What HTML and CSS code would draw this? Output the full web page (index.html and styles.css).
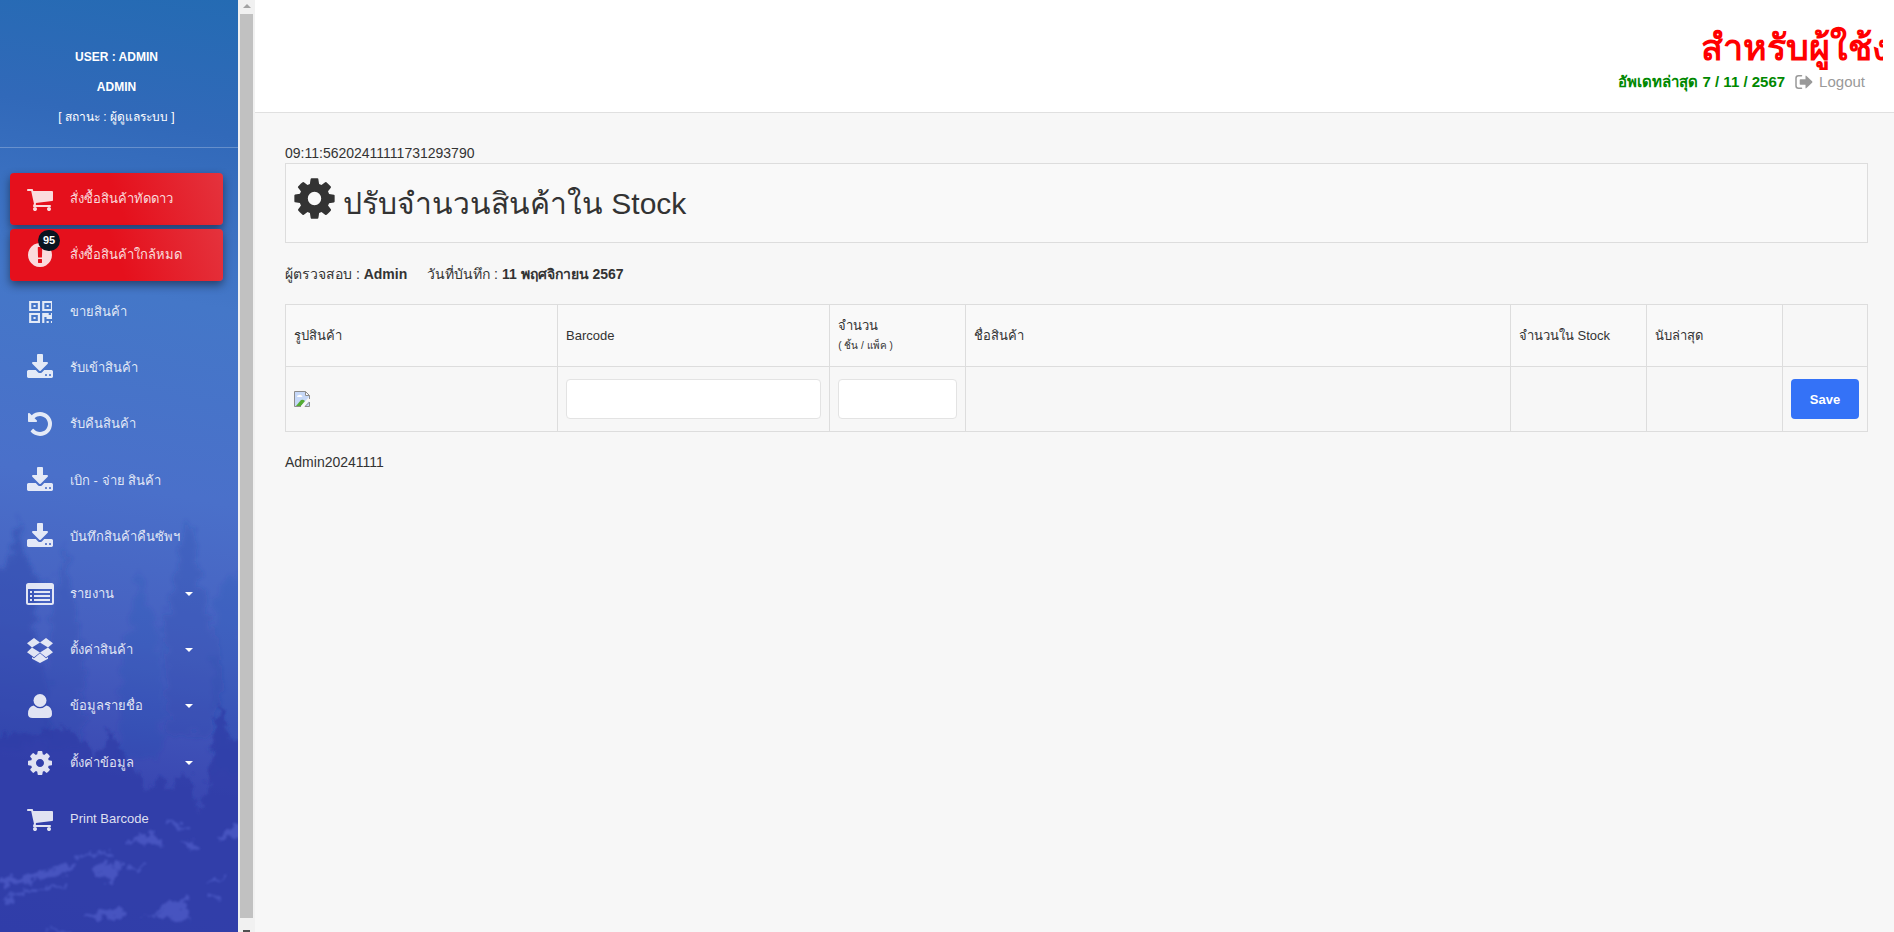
FILE: index.html
```html
<!DOCTYPE html>
<html lang="th">
<head>
<meta charset="utf-8">
<title>Stock</title>
<link rel="stylesheet" href="styles.css">
</head>
<body>
<svg class="defs" aria-hidden="true">
  <symbol id="cart" viewBox="0 0 1792 1792"><path d="M704 1536q0 52-38 90t-90 38-90-38-38-90 38-90 90-38 90 38 38 90zm896 0q0 52-38 90t-90 38-90-38-38-90 38-90 90-38 90 38 38 90zm128-1088v512q0 24-16.500 42.500t-40.500 21.500l-1044 122q13 60 13 70 0 16-24 64h920q26 0 45 19t19 45-19 45-45 19h-1024q-26 0-45-19t-19-45q0-11 8-31.500t16-36 21.500-40 15.500-29.500l-177-823h-204q-26 0-45-19t-19-45 19-45 45-19h256q16 0 28.500 6.500t19.500 15.500 13 24.500 8 26 5.500 29.500 4.500 26h1201q26 0 45 19t19 45z"/></symbol>
  <symbol id="cog" viewBox="0 0 1792 1792"><path d="M1152 896q0-106-75-181t-181-75-181 75-75 181 75 181 181 75 181-75 75-181zm512-109v222q0 12-8 23t-20 13l-185 28q-19 54-39 91 35 50 107 138 10 12 10 25t-9 23q-27 37-99 108t-94 71q-12 0-26-9l-138-108q-44 23-91 38-16 136-29 186-7 28-36 28h-222q-14 0-24.500-8.500t-11.500-21.500l-28-184q-49-16-90-37l-141 107q-10 9-25 9-14 0-25-11-126-114-165-168-7-10-7-23 0-12 8-23 15-21 51-66.500t54-70.500q-27-50-41-99l-183-27q-13-2-21-12.500t-8-23.500v-222q0-12 8-23t19-13l186-28q14-46 39-92-40-57-107-138-10-12-10-24 0-10 9-23 26-36 98.500-107.500t94.500-71.500q13 0 26 10l138 107q44-23 91-38 16-136 29-186 7-28 36-28h222q14 0 24.500 8.500t11.500 21.500l28 184q49 16 90 37l142-107q9-9 24-9 13 0 25 10 129 119 165 170 7 8 7 22 0 12-8 23-15 21-51 66.500t-54 70.500q26 50 41 98l183 28q13 2 21 12.500t8 23.500z"/></symbol>
  <symbol id="alert" viewBox="0 0 1792 1792"><path d="M896 128q209 0 385.500 103t279.500 279.500 103 385.500-103 385.500-279.500 279.500-385.500 103-385.500-103-279.500-279.500-103-385.500 103-385.500 279.500-279.500 385.500-103zm128 1247v-190q0-14-9-23.500t-22-9.500h-192q-13 0-23 10t-10 23v190q0 13 10 23t23 10h192q13 0 22-9.500t9-23.500zm-2-344l18-621q0-12-10-18-10-8-24-8h-220q-14 0-24 8-10 6-10 18l17 621q0 10 10 17.500t24 7.500h185q14 0 23.500-7.500t10.500-17.500z"/></symbol>
  <symbol id="qr" viewBox="128 128 1408 1408" preserveAspectRatio="none"><path d="M576 1152v128h-128v-128h128zm0-768v128h-128v-128h128zm768 0v128h-128v-128h128zm-1024 1023h384v-383h-384v383zm0-767h384v-384h-384v384zm768 0h384v-384h-384v384zm-256 256v640h-640v-640h640zm512 512v128h-128v-128h128zm256 0v128h-128v-128h128zm0-512v384h-384v-128h-128v384h-128v-640h384v128h128v-128h128zm-768-768v640h-640v-640h640zm768 0v640h-640v-640h640z"/></symbol>
  <symbol id="download" viewBox="0 0 1792 1792"><path d="M1344 1344q0-26-19-45t-45-19-45 19-19 45 19 45 45 19 45-19 19-45zm256 0q0-26-19-45t-45-19-45 19-19 45 19 45 45 19 45-19 19-45zm128-224v320q0 40-28 68t-68 28h-1472q-40 0-68-28t-28-68v-320q0-40 28-68t68-28h465l135 136q58 56 136 56t136-56l136-136h464q40 0 68 28t28 68zm-325-569q17 41-14 70l-448 448q-18 19-45 19t-45-19l-448-448q-31-29-14-70 17-39 59-39h256v-448q0-26 19-45t45-19h256q26 0 45 19t19 45v448h256q42 0 59 39z"/></symbol>
  <symbol id="undo" viewBox="0 0 1792 1792"><path d="M1664 896q0 156-61 298t-164 245-245 164-298 61q-172 0-327-72.500t-264-204.500q-7-10-6.500-22.500t8.500-20.500l137-138q10-9 25-9 16 2 23 12 73 95 179 147t225 52q104 0 198.500-40.500t163.500-109.500 109.500-163.500 40.500-198.500-40.500-198.500-109.500-163.500-163.500-109.500-198.500-40.500q-98 0-188 35.500t-160 101.500l137 138q31 30 14 69-17 40-59 40h-448q-26 0-45-19t-19-45v-448q0-42 40-59 39-17 69 14l130 129q107-101 244.500-156.500t284.500-55.500q156 0 298 61t245 164 164 245 61 298z"/></symbol>
  <symbol id="list" viewBox="0 0 28 28"><path fill-rule="evenodd" d="M2.500 3h23A2.500 2.500 0 0 1 28 5.500v17a2.500 2.500 0 0 1-2.500 2.500h-23A2.500 2.500 0 0 1 0 22.500v-17A2.500 2.500 0 0 1 2.500 3zM2 9v13.500q0 .5.500.5h23q.5 0 .5-.5V9zM4 11h2v2H4zm4 0h16v2H8zM4 15h2v2H4zm4 0h16v2H8zM4 19h2v2H4zm4 0h16v2H8z"/></symbol>
  <symbol id="box" viewBox="0 0 28 28"><path d="M8 2l6 4.500-8 5-5-4.300zM20 2l7 5.200-5 4.300-8-5zM6 11.500l8 5-6 4.700-7-4.900zM22 11.500l5 4.800-7 4.900-6-4.700zM14 17.300l6 4.900 2-1.300v1.800L14 27l-8-4.300v-1.800l2 1.300z"/></symbol>
  <symbol id="user" viewBox="0 0 28 28"><circle cx="14" cy="8.500" r="6.500"/><path d="M7.500 13.500Q14 19 20.500 13.500 26 14.500 26 22q0 4-4.500 4h-15Q2 26 2 22q0-7.500 5.500-8.500z"/></symbol>
  <symbol id="signout" viewBox="0 0 18 16"><path fill="none" stroke="currentColor" stroke-width="1.500" stroke-linecap="round" d="M6.500 1.800h-3Q1 1.800 1 4.300v7.400q0 2.500 2.500 2.500h3"/><path d="M5.500 5.200h5V2.300q0-1.200 1-.4l5.600 5.400q.7.700 0 1.400l-5.600 5.400q-1 .8-1-.4v-2.900h-5q-.8 0-.8-.8V6q0-.8.8-.8z"/></symbol>
</svg>
<div class="page">
  <aside class="sidebar">
    <svg class="scenery" viewBox="0 0 238 932" preserveAspectRatio="none" aria-hidden="true">
      <defs>
        <filter id="haze" x="-10%" y="-10%" width="120%" height="120%"><feTurbulence type="fractalNoise" baseFrequency=".09" numOctaves="3" seed="4"/><feDisplacementMap in="SourceGraphic" scale="24" xChannelSelector="R" yChannelSelector="G"/><feGaussianBlur stdDeviation="2"/></filter>
        <filter id="rough" x="-10%" y="-10%" width="120%" height="120%"><feTurbulence type="fractalNoise" baseFrequency=".12" numOctaves="3" seed="7"/><feDisplacementMap in="SourceGraphic" scale="16" xChannelSelector="R" yChannelSelector="G"/><feGaussianBlur stdDeviation=".9"/></filter>
      </defs>
      <g filter="url(#haze)" fill="#2342a4">
        <path opacity=".4" d="M-10 570l16 0 12-55 8 50 16 10-8 40 12 60 4 60-60 20z"/>
        <path opacity=".22" d="M48 640l16-100 16 100 4 110H44zM164 625l24-105 22 105 14 50-12 60h-44z"/>
        <path opacity=".12" d="M122 660l18-90 22 80v110h-44zM214 590l30-20v200h-30z"/>
      </g>
      <g filter="url(#rough)" fill="#2c3ca6">
        <path opacity=".72" d="M-10 738l28-6 18 4 14-8 18 0 14 14 14 12 8-10 6-16 10 18 8 16 14 14 4 16 16-18 10 18 10-20 8 4 8 36 10-20 4-50 8-42 10 40 14 0v220H-10z"/>
      </g>
      <g filter="url(#rough)" fill="#6675e2">
        <path opacity=".4" d="M0 878q30-2 44-8 20-8 32-5-8 12-38 16-20 4-38 3zM125 846q14-14 28-14 8 4 8 14-20-4-36 0zM180 842q16-2 22 6-12 6-22-6zM218 840q10-16 22-16v14q-12 0-22 2zM96 866q18-6 26 0 0 10-12 16-14 0-14-16zM84 918q16-12 40-8v8zM136 918q18 0 30-12 10-6 20-10 4 8-4 14l10 12q-30-8-56-4z"/>
      </g>
      <g filter="url(#rough)" fill="none" stroke="#6373df" stroke-linecap="round" opacity=".4" stroke-width="3">
        <path d="M2 902q30-16 64-17M76 858q20-10 34-4M208 882l18-6M210 894l10 4M168 822l18 6M50 930l20 2M130 870l14-4"/>
      </g>
    </svg>
    <div class="profile">
      <strong>USER : ADMIN</strong>
      <strong>ADMIN</strong>
      <span>[ สถานะ : ผู้ดูแลระบบ ]</span>
    </div>
    <nav>
      <ul class="menu">
        <li><a class="item hot" href="#"><svg class="icon"><use href="#cart"/></svg>สั่งซื้อสินค้าทัดดาว</a></li>
        <li><a class="item hot" href="#"><svg class="icon"><use href="#alert"/></svg><span class="badge">95</span>สั่งซื้อสินค้าใกล้หมด</a></li>
        <li><a class="item" href="#"><svg class="icon qr"><use href="#qr"/></svg>ขายสินค้า</a></li>
        <li><a class="item" href="#"><svg class="icon"><use href="#download"/></svg>รับเข้าสินค้า</a></li>
        <li><a class="item" href="#"><svg class="icon"><use href="#undo"/></svg>รับคืนสินค้า</a></li>
        <li><a class="item" href="#"><svg class="icon"><use href="#download"/></svg>เบิก - จ่าย สินค้า</a></li>
        <li><a class="item" href="#"><svg class="icon"><use href="#download"/></svg>บันทึกสินค้าคืนซัพฯ</a></li>
        <li><a class="item" href="#"><svg class="icon"><use href="#list"/></svg>รายงาน<i class="caret"></i></a></li>
        <li><a class="item" href="#"><svg class="icon"><use href="#box"/></svg>ตั้งค่าสินค้า<i class="caret"></i></a></li>
        <li><a class="item" href="#"><svg class="icon"><use href="#user"/></svg>ข้อมูลรายชื่อ<i class="caret"></i></a></li>
        <li><a class="item" href="#"><svg class="icon"><use href="#cog"/></svg>ตั้งค่าข้อมูล<i class="caret"></i></a></li>
        <li><a class="item" href="#"><svg class="icon"><use href="#cart"/></svg>Print Barcode</a></li>
      </ul>
    </nav>
  </aside>
  <div class="scrollbar" aria-hidden="true"><i class="up"></i><i class="thumb"></i><i class="down"></i></div>
  <div class="main">
    <header class="topbar">
      <div class="ticker"><span>สำหรับผู้ใช้งาน</span></div>
      <div class="status"><strong>อัพเดทล่าสุด 7 / 11 / 2567</strong><a href="#"><svg class="out"><use href="#signout"/></svg>Logout</a></div>
    </header>
    <main class="content">
      <div class="stamp">09:11:56202411111731293790</div>
      <h1 class="title"><svg class="gear"><use href="#cog"/></svg>ปรับจำนวนสินค้าใน Stock</h1>
      <p class="meta"><span>ผู้ตรวจสอบ : <b>Admin</b></span><span>วันที่บันทึก : <b>11 พฤศจิกายน 2567</b></span></p>
      <table class="grid">
        <colgroup><col class="wide"><col class="wide"><col class="narrow"><col><col class="narrow"><col class="narrow"><col class="action"></colgroup>
        <thead>
          <tr><th>รูปสินค้า</th><th><label for="barcode">Barcode</label></th><th><label for="qty">จำนวน<small>( ชิ้น / แพ็ค )</small></label></th><th>ชื่อสินค้า</th><th>จำนวนใน Stock</th><th>นับล่าสุด</th><td></td></tr>
        </thead>
        <tbody>
          <tr>
            <td><svg class="broken" viewBox="0 0 16 16" role="img" aria-label="broken image"><path fill="#c6d8f8" d="M1 1h10l4 4v10H1z"/><path fill="#fff" d="M3 6q0-2 2-2 2-1 3 1 1 1 0 1zM11 1v4h4z"/><path fill="#55ad33" d="M2 15l5-6q2-1 4 1l-4 5z"/><path fill="#f7f7f7" d="M7 15l8-9v4l-4 5z"/><path fill="none" stroke="#8d8d8d" d="M7 15.500H.5V.5h11l4 4V8M11.500.5v4h4M11 15.500h4.500V11z"/></svg></td>
            <td><input id="barcode" class="field" type="text"></td>
            <td><input id="qty" class="field" type="text"></td>
            <td></td><td></td><td></td>
            <td><button class="save" type="button">Save</button></td>
          </tr>
        </tbody>
      </table>
      <div>Admin20241111</div>
    </main>
  </div>
</div>
</body>
</html>
```

FILE: styles.css
```css
* { box-sizing: border-box; }
body {
  margin: 0;
  background: #f7f7f7;
  color: #333;
  font: 14px/20px "Liberation Sans", Arial, sans-serif;
}
.defs { position: absolute; width: 0; height: 0; }
svg { fill: currentColor; }
a { color: inherit; text-decoration: none; }
.page { display: flex; height: 100vh; overflow: hidden; }

.sidebar {
  position: relative;
  flex: none;
  width: 238px;
  overflow: hidden;
  color: #fff;
  background: linear-gradient(190deg, #246bb3 0%, #3169b9 14%, #4477c8 32%, #4a70ca 52%, #4660c0 68%, #3a48b2 82%, #3744b0 100%);
}
.scenery { position: absolute; inset: 0; width: 100%; height: 100%; }
.profile {
  position: relative;
  display: flex;
  flex-direction: column;
  align-items: center;
  height: 148px;
  padding: 42px 5px 0 0;
  border-bottom: 1px solid rgba(255, 255, 255, .25);
  font-size: 12px;
  line-height: 30px;
}
.menu {
  position: relative;
  display: flex;
  flex-direction: column;
  justify-content: space-between;
  height: 672px;
  margin: 25px 15px 0 10px;
  padding: 0;
  list-style: none;
}
.item {
  position: relative;
  display: flex;
  align-items: center;
  height: 52px;
  padding: 0 30px 0 16px;
  border-radius: 4px;
  color: rgba(255, 255, 255, .85);
  font-size: 13px;
}
.hot {
  background: linear-gradient(70deg, #e5101c 50%, #e4333d);
  box-shadow: 0 4px 10px rgba(0, 0, 0, .45);
}
.icon { flex: none; width: 28px; height: 28px; margin-right: 16px; }
.qr { width: 24px; height: 22px; margin: 0 18px 0 2px; }
.badge {
  position: absolute;
  left: 28px;
  top: 1px;
  width: 22px;
  height: 21px;
  border-radius: 11px;
  background: #0a1420;
  color: #fff;
  font-size: 11px;
  font-weight: bold;
  line-height: 21px;
  text-align: center;
}
.caret {
  margin-left: auto;
  border: 4px solid transparent;
  border-top-color: #fff;
  border-bottom: 0;
}

.scrollbar {
  display: flex;
  flex-direction: column;
  align-items: center;
  flex: none;
  width: 17px;
  padding-top: 4px;
  background: #f1f1f1;
}
.up { border: 4px solid transparent; border-top: 0; border-bottom-color: #a3a3a3; }
.thumb { flex: 1; width: 13px; margin: 6px 0 12px; background: #c1c1c1; }
.down { width: 7px; height: 2px; background: #505050; }

.main { flex: 1; min-width: 0; }
.topbar {
  height: 113px;
  padding: 24px 11px 0 0;
  border-bottom: 1px solid #e0e0e0;
  background: #fff;
}
.ticker {
  width: 182px;
  height: 46px;
  margin-left: auto;
  overflow: hidden;
  color: #f00;
  font-size: 36px;
  font-weight: bold;
  line-height: 48px;
  white-space: nowrap;
}
.status {
  display: flex;
  justify-content: flex-end;
  align-items: center;
  gap: 10px;
  padding-right: 18px;
  line-height: 24px;
}
.status strong { color: #080; font-size: 15px; }
.status a { display: flex; align-items: center; gap: 6px; color: #999; font-size: 15px; }
.out { width: 18px; height: 16px; }

.content { padding: 30px 26px 0 30px; }
.title {
  display: flex;
  height: 80px;
  margin: 0;
  padding: 8px;
  border: 1px solid #ddd;
  background: #f9f9f9;
  font-size: 30px;
  font-weight: normal;
  line-height: 64px;
}
.gear { flex: none; width: 47px; height: 47px; margin: 3px 5px 0 -3px; }
.meta { display: flex; gap: 20px; margin: 21px 0 20px; }
.grid {
  width: 100%;
  margin-bottom: 20px;
  border-collapse: collapse;
  table-layout: fixed;
}
.grid th, .grid td {
  padding: 8px;
  border: 1px solid #ddd;
  font-size: 13px;
  font-weight: normal;
  text-align: left;
}
.grid th { height: 62px; background: #f9f9f9; }
.grid td { height: 65px; }
.grid thead td { height: 62px; }
.grid small { display: block; font-size: 10px; }
.wide { width: 17.200%; }
.narrow { width: 8.600%; }
.action { width: 85px; }
.broken { display: block; width: 16px; height: 16px; }
.field, .save { display: block; width: 100%; height: 40px; border-radius: 4px; }
.field { padding: 8px 12px; border: 1px solid #e3e3e3; background: #fff; font: inherit; }
.save { border: 0; background: #3472f7; color: #fff; font: bold 13px "Liberation Sans", Arial, sans-serif; }
```
